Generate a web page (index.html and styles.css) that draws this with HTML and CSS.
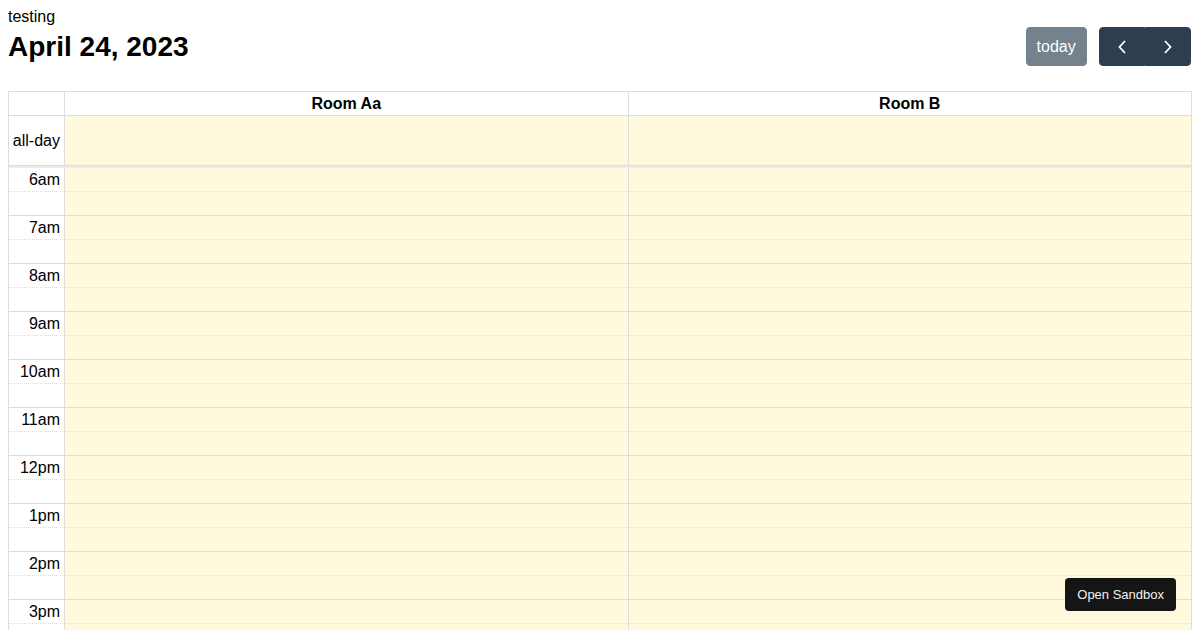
FILE: index.html
```html
<!DOCTYPE html>
<html>
<head>
<meta charset="utf-8">
<link rel="stylesheet" href="styles.css">
</head>
<body>
<div class="label-top">testing</div>
<div class="cal">
  <div class="toolbar">
    <h2 class="title">April 24, 2023</h2>
    <div class="tools">
      <button class="btn btn-today">today</button>
      <div class="btn-group">
        <button class="btn btn-nav btn-prev" aria-label="prev">
          <svg width="10" height="14" viewBox="0 0 10 14"><path d="M8 1 L2.5 7 L8 13" fill="none" stroke="#fff" stroke-width="1.8"/></svg>
        </button>
        <button class="btn btn-nav btn-next" aria-label="next">
          <svg width="10" height="14" viewBox="0 0 10 14"><path d="M2 1 L7.5 7 L2 13" fill="none" stroke="#fff" stroke-width="1.8"/></svg>
        </button>
      </div>
    </div>
  </div>
  <div class="grid">
    <div class="row head">
      <div class="cell axis"></div>
      <div class="cell res">Room Aa</div>
      <div class="cell res">Room B</div>
    </div>
    <div class="row allday">
      <div class="cell axis axis-mid">all-day</div>
      <div class="cell day"></div>
      <div class="cell day"></div>
    </div>
    <div class="divider"></div>
    <div class="row slot major"><div class="cell axis time">6am</div><div class="cell day"></div><div class="cell day"></div></div>
    <div class="row slot"><div class="cell axis"></div><div class="cell day"></div><div class="cell day"></div></div>
    <div class="row slot major"><div class="cell axis time">7am</div><div class="cell day"></div><div class="cell day"></div></div>
    <div class="row slot"><div class="cell axis"></div><div class="cell day"></div><div class="cell day"></div></div>
    <div class="row slot major"><div class="cell axis time">8am</div><div class="cell day"></div><div class="cell day"></div></div>
    <div class="row slot"><div class="cell axis"></div><div class="cell day"></div><div class="cell day"></div></div>
    <div class="row slot major"><div class="cell axis time">9am</div><div class="cell day"></div><div class="cell day"></div></div>
    <div class="row slot"><div class="cell axis"></div><div class="cell day"></div><div class="cell day"></div></div>
    <div class="row slot major"><div class="cell axis time">10am</div><div class="cell day"></div><div class="cell day"></div></div>
    <div class="row slot"><div class="cell axis"></div><div class="cell day"></div><div class="cell day"></div></div>
    <div class="row slot major"><div class="cell axis time">11am</div><div class="cell day"></div><div class="cell day"></div></div>
    <div class="row slot"><div class="cell axis"></div><div class="cell day"></div><div class="cell day"></div></div>
    <div class="row slot major"><div class="cell axis time">12pm</div><div class="cell day"></div><div class="cell day"></div></div>
    <div class="row slot"><div class="cell axis"></div><div class="cell day"></div><div class="cell day"></div></div>
    <div class="row slot major"><div class="cell axis time">1pm</div><div class="cell day"></div><div class="cell day"></div></div>
    <div class="row slot"><div class="cell axis"></div><div class="cell day"></div><div class="cell day"></div></div>
    <div class="row slot major"><div class="cell axis time">2pm</div><div class="cell day"></div><div class="cell day"></div></div>
    <div class="row slot"><div class="cell axis"></div><div class="cell day"></div><div class="cell day"></div></div>
    <div class="row slot major"><div class="cell axis time">3pm</div><div class="cell day"></div><div class="cell day"></div></div>
    <div class="row slot"><div class="cell axis"></div><div class="cell day"></div><div class="cell day"></div></div>
  </div>
</div>
<button class="sandbox">Open Sandbox</button>
</body>
</html>
```
FILE: styles.css
```css
* { box-sizing: border-box; }
html, body { margin: 0; padding: 0; }
body {
  margin: 8px;
  font-family: "Liberation Sans", Arial, sans-serif;
  font-size: 16px;
  color: #000;
  background: #fff;
  overflow: hidden;
}
.label-top { line-height: 18.4px; }
.toolbar {
  display: flex;
  justify-content: space-between;
  align-items: center;
  margin-top: 1px;
  margin-bottom: 25px;
}
.title {
  margin: 0;
  font-size: 28px;
  font-weight: bold;
  line-height: 32px;
}
.tools { display: flex; align-items: center; margin-right: 1px; }
.btn {
  font-family: "Liberation Sans", Arial, sans-serif;
  font-size: 16px;
  line-height: 24px;
  padding: 6.4px 9.8px;
  border: 1px solid #2c3e50;
  background: #2c3e50;
  color: #fff;
  border-radius: 4px;
  margin: 0;
  height: 38.8px;
}
.btn-today { opacity: 0.65; margin-right: 12.5px; }
.btn-group { display: flex; }
.btn-nav {
  width: 46px;
  display: flex;
  align-items: center;
  justify-content: center;
  padding: 0;
}
.btn-prev { border-radius: 4px 0 0 4px; }
.btn-next { border-radius: 0 4px 4px 0; }
.btn-nav svg { display: block; }
.grid {
  border-top: 1px solid #ddd;
  border-left: 1px solid #ddd;
}
.row {
  display: grid;
  grid-template-columns: 56px 1fr 1fr;
}
.cell {
  border-right: 1px solid #ddd;
  border-bottom: 1px solid #ddd;
}
.head .cell { height: 24px; }
.res {
  font-weight: bold;
  text-align: center;
  padding: 2px 4px;
  line-height: 19px;
}
.allday .cell { height: 50px; }
.axis { background: #fff; }
.axis-mid {
  display: flex;
  align-items: center;
  justify-content: flex-end;
  padding: 0 4px 0 0;
  white-space: nowrap;
}
.day { background: #fff9de; }
.divider {
  height: 2px;
  background: #ebebeb;
  border-right: 1px solid #ddd;
}
.slot .cell { height: 24px; }
.slot.major .cell { border-bottom: 1px dotted #ddd; }
.slot:not(.major) .cell { border-bottom: 1px solid #ddd; }
.time {
  text-align: right;
  padding: 0 4px;
  line-height: 23px;
}
.sandbox {
  position: fixed;
  right: 24px;
  bottom: 19px;
  background: #151515;
  color: #f2f2f2;
  border: none;
  border-radius: 4px;
  font-family: "Liberation Sans", Arial, sans-serif;
  font-size: 13px;
  line-height: 15px;
  padding: 9px 12px;
}
```
